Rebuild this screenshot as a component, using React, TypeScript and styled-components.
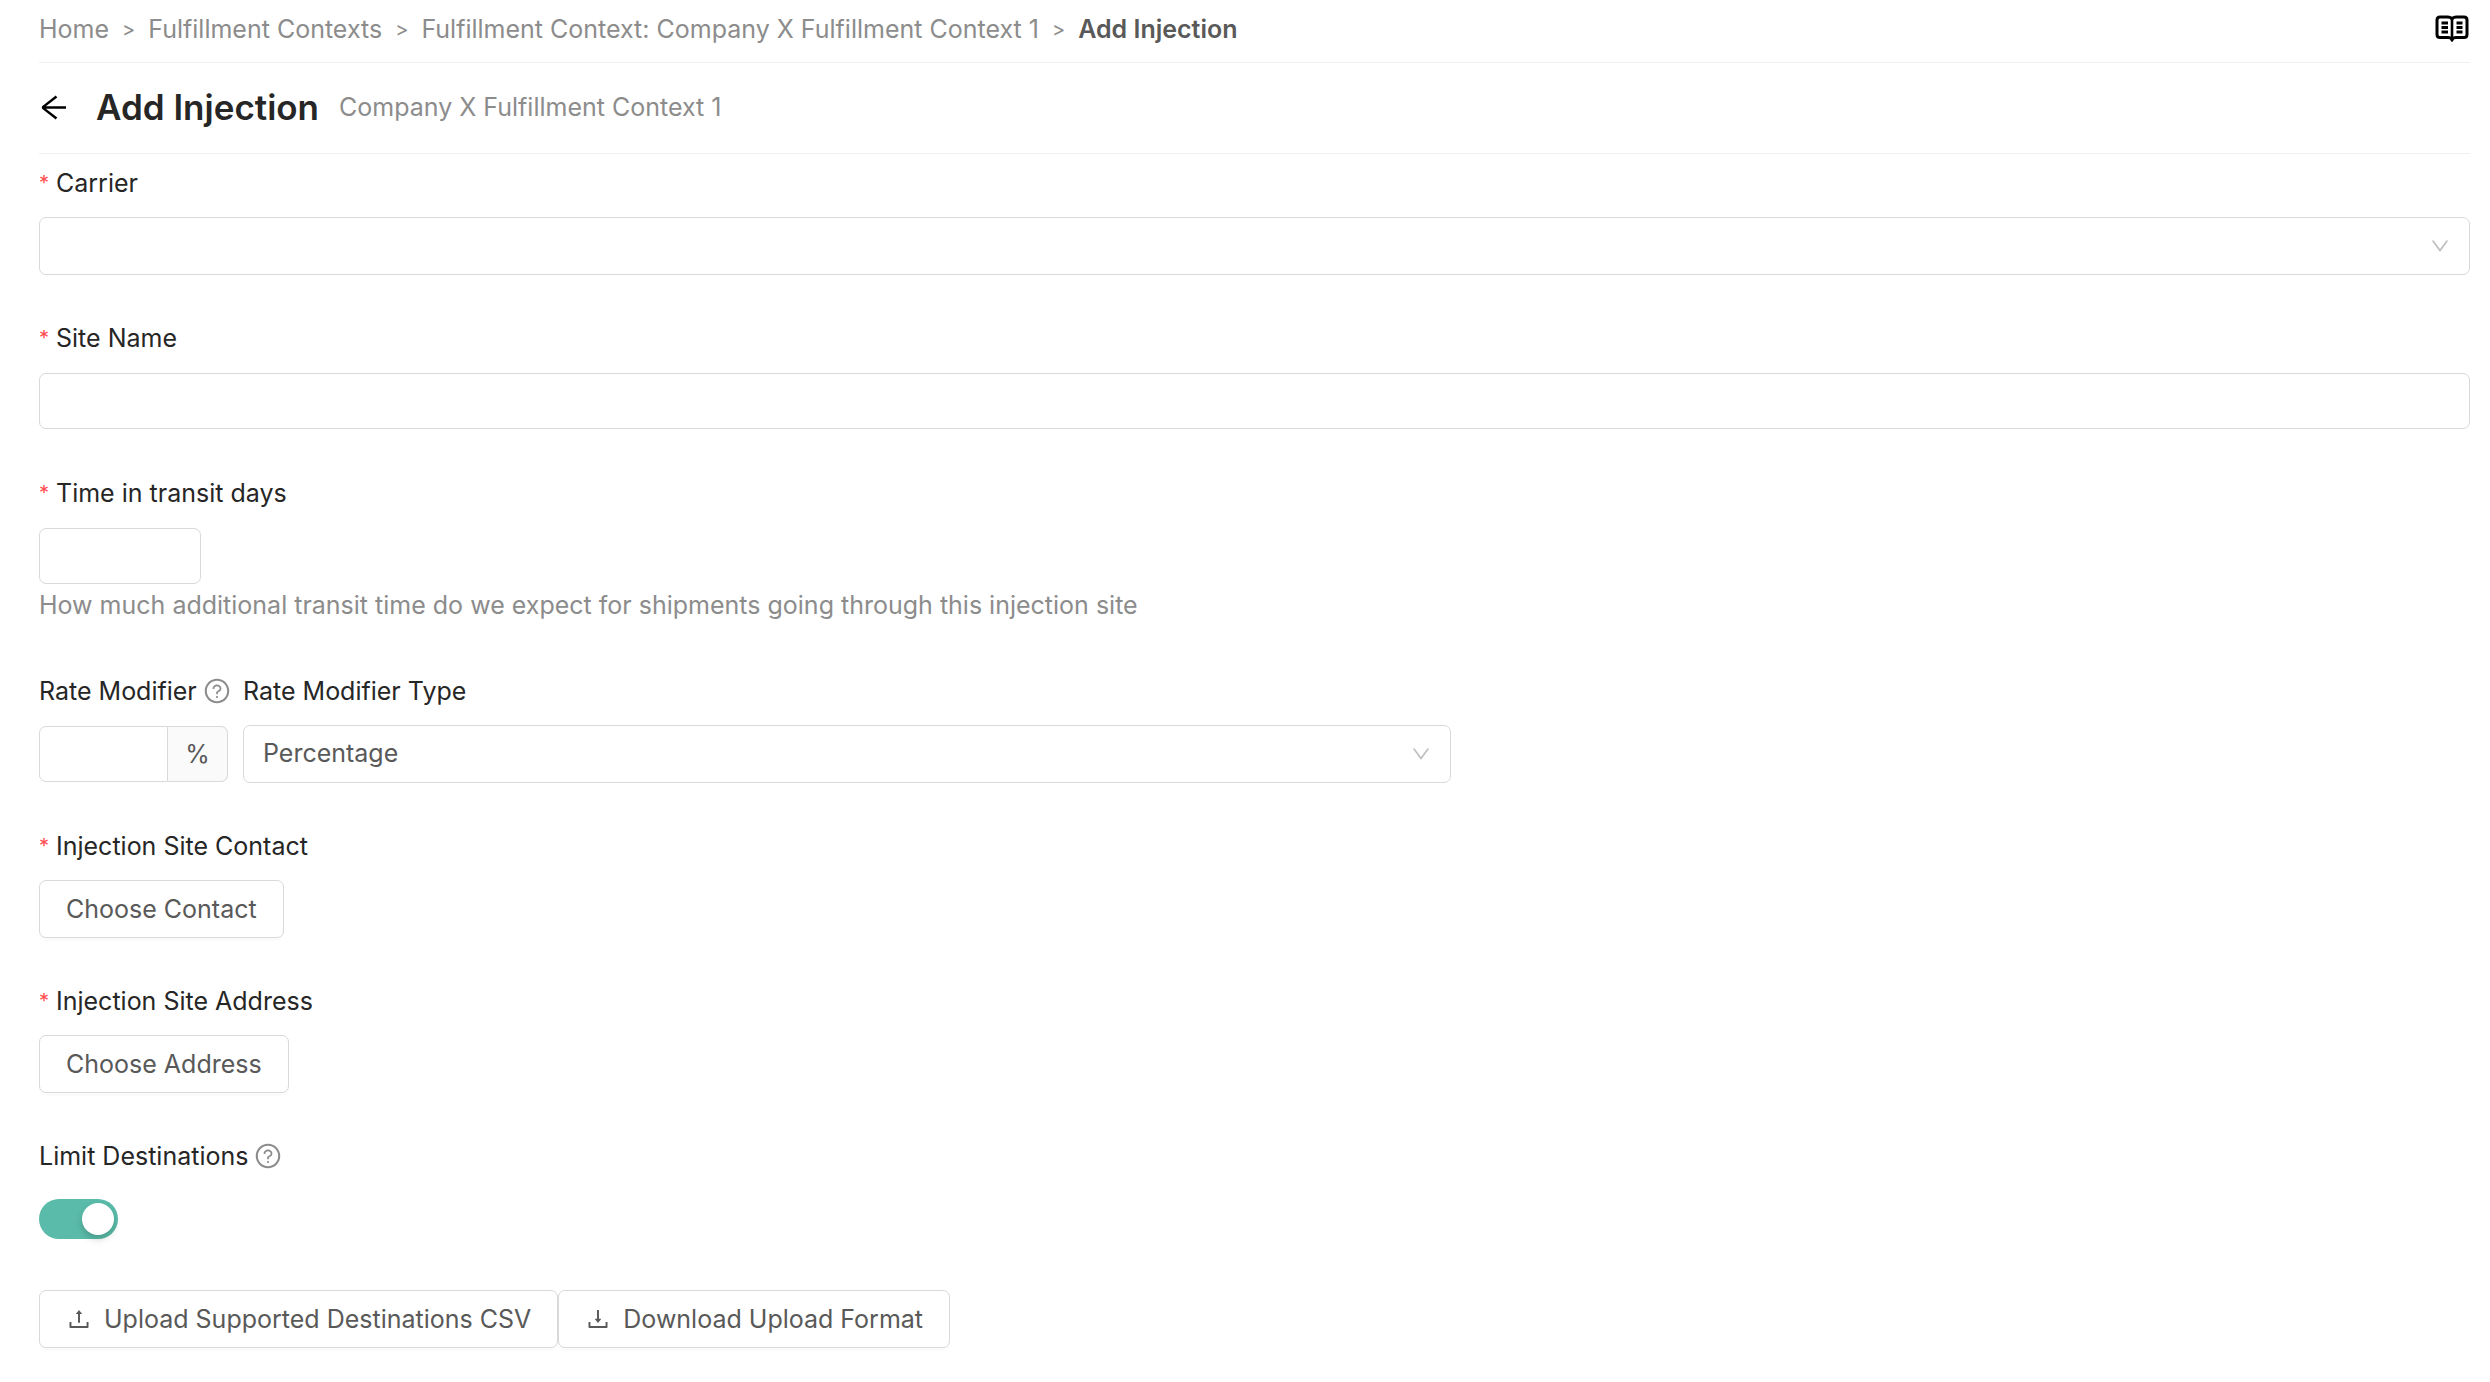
import React, { useState } from "react";
import styled, { createGlobalStyle } from "styled-components";
import {
  AiOutlineDown,
  AiOutlineDownload,
  AiOutlineQuestionCircle,
  AiOutlineUpload,
} from "react-icons/ai";

const color = {
  heading: "#262626",
  text: "#595959",
  muted: "#8c8c8c",
  border: "#d9d9d9",
  divider: "#f0f0f0",
  addon: "#fafafa",
  icon: "#bfbfbf",
  danger: "#ff4d4f",
  accent: "#5abbaa",
};

const GlobalStyle = createGlobalStyle`
  *, *::before, *::after { box-sizing: border-box; }
  body {
    margin: 0;
    background: #fff;
    color: ${color.text};
    font-family: Inter, "Liberation Sans", sans-serif;
    font-size: 25px;
    line-height: 40px;
  }
  button, input, select { font: inherit; color: inherit; }
`;

const Page = styled.div`
  padding: 0 20px 32px 39px;
`;

const TopBar = styled.div`
  display: flex;
  align-items: center;
  justify-content: space-between;
  height: 63px;
  padding-bottom: 6px;
  border-bottom: 1px solid ${color.divider};
`;

const Crumbs = styled.ol`
  display: flex;
  margin: 0;
  padding: 2px 0 0;
  list-style: none;
  color: ${color.muted};
`;

const Crumb = styled.li`
  display: flex;

  & + &::before {
    content: ">";
    margin: 0 13px;
    font-size: 20px;
  }
`;

const CrumbLink = styled.a`
  color: inherit;
  text-decoration: none;
`;

const CurrentCrumb = styled.span`
  color: ${color.text};
  font-weight: 600;
`;

const IconButton = styled.button`
  display: flex;
  padding: 0;
  border: 0;
  background: none;
  color: #000;
  cursor: pointer;
`;

const PageHeader = styled.header`
  display: flex;
  align-items: center;
  height: 91px;
  padding-bottom: 2px;
  border-bottom: 1px solid ${color.divider};
`;

const Title = styled.h1`
  margin: 0 20px 0 28px;
  color: ${color.heading};
  font-size: 35px;
  font-weight: 600;
`;

const Subtitle = styled.span`
  color: ${color.muted};
`;

const Form = styled.form`
  padding-top: 8px;
`;

const Field = styled.div`
  margin-bottom: 42px;
`;

const LabelRow = styled.div`
  display: flex;
  align-items: center;
  gap: 6px;
  margin-bottom: 13px;
  color: ${color.heading};
  line-height: 42px;
  white-space: nowrap;
`;

const Required = styled.span`
  width: 11px;
  color: ${color.danger};
  font-size: 20px;
`;

const HelpIcon = styled(AiOutlineQuestionCircle)`
  flex: none;
  width: 28px;
  height: 28px;
  color: ${color.muted};
`;

const Control = styled.div`
  display: flex;
  align-items: center;
  min-height: 58px;
`;

const TextInput = styled.input<{ $width?: string; $joined?: boolean }>`
  width: ${(p) => p.$width ?? "100%"};
  height: 56px;
  padding: 0 20px;
  border: 1px solid ${color.border};
  border-radius: ${(p) => (p.$joined ? "7px 0 0 7px" : "7px")};
  background: #fff;
`;

const Addon = styled.span`
  display: flex;
  align-items: center;
  justify-content: center;
  width: 60px;
  height: 56px;
  border: 1px solid ${color.border};
  border-left: 0;
  border-radius: 0 7px 7px 0;
  background: ${color.addon};
`;

const SelectBox = styled.div`
  position: relative;
  width: 100%;
`;

const Select = styled.select`
  display: block;
  width: 100%;
  height: 58px;
  padding: 0 60px 2px 19px;
  border: 1px solid ${color.border};
  border-radius: 7px;
  background: #fff;
  appearance: none;
`;

const SelectArrow = styled(AiOutlineDown)`
  position: absolute;
  top: 18px;
  right: 19px;
  width: 22px;
  height: 22px;
  color: ${color.icon};
  pointer-events: none;
`;

const HelpText = styled.p`
  margin: 0;
  padding-bottom: 3px;
  color: ${color.muted};
  line-height: 40px;
`;

const FieldRow = styled.div`
  display: flex;
  gap: 15px;
`;

const NarrowField = styled(Field)`
  width: 189px;
`;

const WideField = styled(Field)`
  width: calc(50% - 8px);
`;

const Button = styled.button`
  display: inline-flex;
  align-items: center;
  gap: 12px;
  height: 58px;
  padding: 0 26px;
  border: 1px solid ${color.border};
  border-radius: 7px;
  background: #fff;
  box-shadow: 0 3px 0 rgba(0, 0, 0, 0.016);
  white-space: nowrap;
  cursor: pointer;

  svg {
    width: 26px;
    height: 26px;
  }
`;

const Switch = styled.input`
  display: flex;
  align-items: center;
  width: 79px;
  height: 40px;
  margin: 0;
  padding: 4px;
  border-radius: 20px;
  background: ${color.icon};
  appearance: none;
  cursor: pointer;

  &::before {
    content: "";
    width: 32px;
    height: 32px;
    border-radius: 50%;
    background: #fff;
    box-shadow: 0 4px 7px rgba(0, 35, 11, 0.2);
  }

  &:checked {
    justify-content: flex-end;
    background: ${color.accent};
  }
`;

const BackIcon = () => (
  <svg width="29" height="29" viewBox="0 0 29 29" fill="none" stroke="currentColor" strokeWidth="2.500" aria-hidden="true">
    <path d="M27 14.500H4M17.500 3.500L4.500 13.600Q3.500 14.500 4.500 15.400L17.500 25.500" />
  </svg>
);

const BookIcon = () => (
  <svg width="35" height="27" viewBox="0 0 35 27" fill="none" stroke="currentColor" aria-hidden="true">
    <path
      d="M17 4C16 2.500 14.500 2 12.500 2H5C3 2 2 3 2 5V19.500C2 21.500 3 22.500 5 22.500H13C15 22.500 16.200 23 17 24.500C17.800 23 19 22.500 21 22.500H29C31 22.500 32 21.500 32 19.500V5C32 3 31 2 29 2H21.500C19.500 2 18 2.500 17 4Z"
      strokeWidth="3"
      strokeLinejoin="round"
    />
    <path d="M17 3V25.500" strokeWidth="2.600" strokeLinecap="round" />
    <path d="M6.500 8H13M6.500 12.500H13M6.500 17H13M21.500 8H27.500M21.500 12.500H27.500M21.500 17H27.500" strokeWidth="2.800" />
  </svg>
);

const App = () => {
  const [limited, setLimited] = useState(true);

  return (
    <>
      <GlobalStyle />
      <Page>
        <TopBar>
          <nav aria-label="Breadcrumb">
            <Crumbs>
              <Crumb><CrumbLink href="#home">Home</CrumbLink></Crumb>
              <Crumb><CrumbLink href="#contexts">Fulfillment Contexts</CrumbLink></Crumb>
              <Crumb>
                <CrumbLink href="#context">Fulfillment Context: Company X Fulfillment Context 1</CrumbLink>
              </Crumb>
              <Crumb><CurrentCrumb aria-current="page">Add Injection</CurrentCrumb></Crumb>
            </Crumbs>
          </nav>
          <IconButton type="button" aria-label="Documentation"><BookIcon /></IconButton>
        </TopBar>

        <PageHeader>
          <IconButton type="button" aria-label="Back"><BackIcon /></IconButton>
          <Title>Add Injection</Title>
          <Subtitle>Company X Fulfillment Context 1</Subtitle>
        </PageHeader>

        <Form onSubmit={(e) => e.preventDefault()}>
          <Field>
            <LabelRow><Required>*</Required><label htmlFor="carrier">Carrier</label></LabelRow>
            <Control>
              <SelectBox>
                <Select id="carrier" required><option value="" /></Select>
                <SelectArrow />
              </SelectBox>
            </Control>
          </Field>

          <Field>
            <LabelRow><Required>*</Required><label htmlFor="site-name">Site Name</label></LabelRow>
            <Control><TextInput id="site-name" type="text" required /></Control>
          </Field>

          <Field>
            <LabelRow><Required>*</Required><label htmlFor="transit-days">Time in transit days</label></LabelRow>
            <Control>
              <TextInput id="transit-days" type="text" inputMode="numeric" required $width="162px" aria-describedby="transit-help" />
            </Control>
            <HelpText id="transit-help">
              How much additional transit time do we expect for shipments going through this injection site
            </HelpText>
          </Field>

          <FieldRow>
            <NarrowField>
              <LabelRow><label htmlFor="rate-modifier">Rate Modifier</label><HelpIcon /></LabelRow>
              <Control>
                <TextInput id="rate-modifier" type="text" inputMode="decimal" $width="129px" $joined />
                <Addon>%</Addon>
              </Control>
            </NarrowField>
            <WideField>
              <LabelRow><label htmlFor="rate-type">Rate Modifier Type</label></LabelRow>
              <Control>
                <SelectBox>
                  <Select id="rate-type"><option>Percentage</option></Select>
                  <SelectArrow />
                </SelectBox>
              </Control>
            </WideField>
          </FieldRow>

          <Field>
            <LabelRow><Required>*</Required><label htmlFor="contact">Injection Site Contact</label></LabelRow>
            <Control><Button id="contact" type="button">Choose Contact</Button></Control>
          </Field>

          <Field>
            <LabelRow><Required>*</Required><label htmlFor="address">Injection Site Address</label></LabelRow>
            <Control><Button id="address" type="button">Choose Address</Button></Control>
          </Field>

          <Field>
            <LabelRow><label htmlFor="limit">Limit Destinations</label><HelpIcon /></LabelRow>
            <Control>
              <Switch id="limit" type="checkbox" role="switch" checked={limited} onChange={(e) => setLimited(e.target.checked)} />
            </Control>
          </Field>

          <Control>
            <Button type="button"><AiOutlineUpload />Upload Supported Destinations CSV</Button>
            <Button type="button"><AiOutlineDownload />Download Upload Format</Button>
          </Control>
        </Form>
      </Page>
    </>
  );
};

export default App;
